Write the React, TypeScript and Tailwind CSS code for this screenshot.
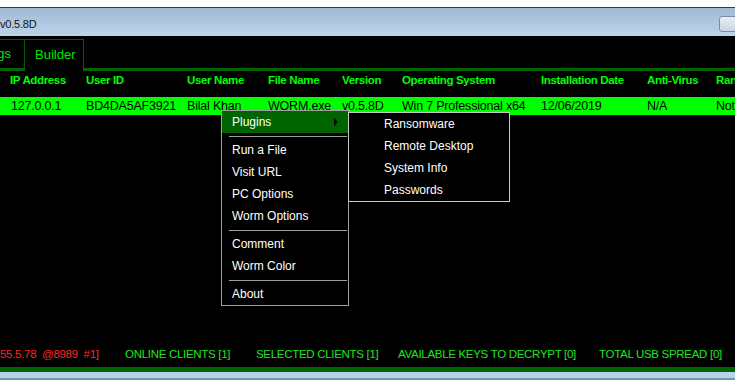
import React from "react";

const cols = [76, 101, 81, 74, 60, 139, 106, 69, 120];
const headers = ["IP Address", "User ID", "User Name", "File Name", "Version", "Operating System", "Installation Date", "Anti-Virus", "Ransomware"];
const row = ["127.0.0.1", "BD4DA5AF3921", "Bilal Khan", "WORM.exe", "v0.5.8D", "Win 7 Professional  x64", "12/06/2019", "N/A", "Not Encrypted"];

function Sep() {
  return (
    <div className="pt-[3px] pb-[2px] pl-[7px] pr-[1px]">
      <div className="h-px bg-[#a0a0a0]" />
    </div>
  );
}

function Item({ label }: { label: string }) {
  return <div className="h-[22px] flex items-center pl-[10px] text-white whitespace-nowrap">{label}</div>;
}

export default function App() {
  return (
    <div
      className="relative w-[735px] h-[384px] overflow-hidden bg-white"
      style={{ fontFamily: '"Liberation Sans", Arial, sans-serif' }}
    >
      <div className="h-[7px] bg-white" />
      <div className="h-px bg-[#3c3c3c]" />
      <div className="h-[28px] flex items-center bg-gradient-to-b from-[#a2b9d4] to-[#bdd4eb]">
        <span className="text-[11px] tracking-[-0.2px] text-[#141414] pt-[5px]">v0.5.8D</span>
        <div className="ml-auto mr-[-6px] mt-[3px] w-[22px] h-[16px] rounded-[3px] border border-[#7b8ea4] bg-gradient-to-b from-[#e8eef5] to-[#c9d6e4] flex items-end justify-end">
          <div className="w-[4px] h-[3px] bg-[#222]" />
        </div>
      </div>

      <div className="h-[331px] bg-black flex flex-col">
        {/* tabs */}
        <div className="h-[35px] pt-[3px] flex">
          <div className="w-[25px] border-t border-r border-[#0b5a0b] border-b-[3px] border-b-[#006400] flex items-center justify-end pr-[13px] text-[13px] text-[#00e400]">
            <span className="pb-[1px]">gs</span>
          </div>
          <div className="w-[59px] border-t border-r border-[#0b5a0b] flex items-center pl-[10px] text-[13px] text-[#00e400]">
            <span className="pb-[1px]">Builder</span>
          </div>
          <div className="flex-1 border-b-[3px] border-[#006400]" />
        </div>
        {/* header */}
        <div className="h-[26px] flex items-center pb-[7px] pl-[10px] text-[#00ff00] font-bold text-[11.5px] tracking-[-0.35px] whitespace-nowrap">
          {headers.map((h, i) => (
            <div key={i} className="shrink-0" style={{ width: cols[i] }}>
              {h}
            </div>
          ))}
        </div>
        {/* data row */}
        <div className="h-[18px] flex items-center pl-[11px] bg-[#00ff00] text-black text-[12.5px] tracking-[-0.2px] whitespace-nowrap">
          {row.map((c, i) => (
            <div key={i} className="shrink-0" style={{ width: i === 0 ? cols[i] - 1 : cols[i] }}>
              {c}
            </div>
          ))}
        </div>
        <div className="flex-1" />
        {/* status */}
        <div className="h-[24px] flex items-center text-[11.5px] tracking-[-0.3px] whitespace-nowrap">
          <div className="w-[125px] shrink-0 text-[#ff2424]">55.5.78&nbsp;&nbsp;@8989&nbsp;&nbsp;#1]</div>
          <div className="w-[131px] shrink-0 text-[#1ee61e]">ONLINE CLIENTS [1]</div>
          <div className="w-[142px] shrink-0 text-[#1ee61e]">SELECTED CLIENTS [1]</div>
          <div className="w-[201px] shrink-0 text-[#1ee61e]">AVAILABLE KEYS TO DECRYPT [0]</div>
          <div className="shrink-0 text-[#1ee61e]">TOTAL USB SPREAD [0]</div>
        </div>
      </div>
      <div className="h-[5px] bg-[#006400]" />
      <div className="h-[6px] bg-[#b9d3ea]" />
      <div className="h-[2px] bg-[#6d9cb2]" />

      {/* context menu */}
      <div className="absolute left-[221px] top-[110px] w-[128px] border border-[#a0a0a0] bg-black text-[12px]">
        <div className="h-[22px] flex items-center pl-[10px] bg-[#006400] text-white relative">
          Plugins
          <svg className="absolute left-[112px] top-[7px]" width="5" height="8" viewBox="0 0 5 8">
            <path d="M0 0 L4 4 L0 8 Z" fill="#000" />
          </svg>
        </div>
        <Sep />
        <Item label="Run a File" />
        <Item label="Visit URL" />
        <Item label="PC Options" />
        <Item label="Worm Options" />
        <Sep />
        <Item label="Comment" />
        <Item label="Worm Color" />
        <Sep />
        <Item label="About" />
      </div>

      {/* submenu */}
      <div className="absolute left-[348px] top-[112px] w-[162px] border border-[#c8c8c8] bg-black text-[12px] text-white">
        {["Ransomware", "Remote Desktop", "System Info", "Passwords"].map((s) => (
          <div key={s} className="h-[22px] flex items-center pl-[35px] whitespace-nowrap">
            {s}
          </div>
        ))}
      </div>
    </div>
  );
}
